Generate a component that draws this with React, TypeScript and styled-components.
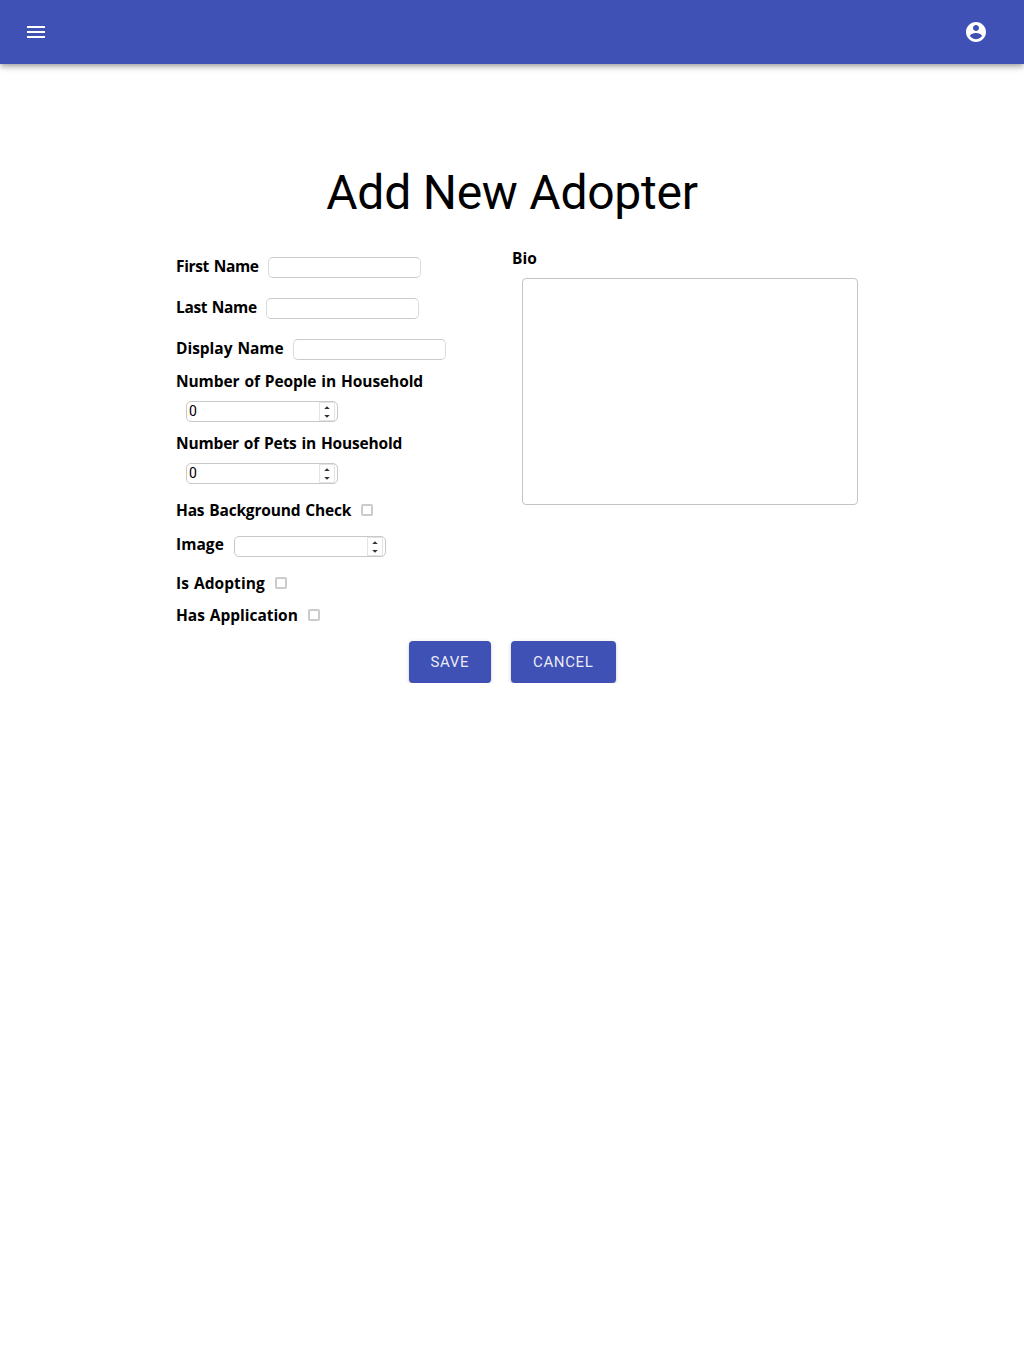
import React from 'react';
import styled, { createGlobalStyle } from 'styled-components';

const Global = createGlobalStyle`
  *, *::before, *::after { box-sizing: border-box; }
  body { margin: 0; background: #fff; color: #000; font-family: 'Open Sans', 'Noto Sans', sans-serif; }
`;

const AppBar = styled.header`
  display: flex;
  align-items: center;
  justify-content: space-between;
  height: 64px;
  padding: 0 24px;
  background: #3f51b5;
  box-shadow: 0 2px 4px -1px rgba(0, 0, 0, 0.2), 0 4px 5px 0 rgba(0, 0, 0, 0.14), 0 1px 10px 0 rgba(0, 0, 0, 0.12);
`;

const IconButton = styled.button<{ $pad?: number }>`
  display: flex;
  padding: 0 ${p => p.$pad ?? 0}px;
  border: 0;
  background: none;
  color: #fff;

  svg { width: 24px; height: 24px; fill: currentColor; }
`;

const Page = styled.main`
  width: 672px;
  margin: 0 auto;
  padding-top: 101px;
`;

const Title = styled.h1`
  margin: 0 0 26px;
  font: 400 48px/56px Roboto, sans-serif;
  letter-spacing: -0.25px;
  text-align: center;
`;

const Columns = styled.form`
  display: grid;
  grid-template-columns: 336px 336px;
`;

const Column = styled.div`
  display: flex;
  flex-direction: column;
`;

const Row = styled.div<{ $h: number }>`
  display: flex;
  align-items: center;
  gap: 10px;
  height: ${p => p.$h}px;
`;

const Stack = styled.div`
  display: flex;
  flex-direction: column;
  gap: 9px;
  height: 62px;
  padding-top: 1px;
`;

const Label = styled.label<{ $w?: number; $ls?: number; $lift?: number }>`
  flex: none;
  width: ${p => (p.$w ? p.$w + 'px' : 'auto')};
  margin-bottom: ${p => (p.$lift ?? 0) * 2}px;
  font-size: 15.5px;
  font-weight: 700;
  line-height: 21px;
  letter-spacing: ${p => p.$ls ?? 0}px;
  word-spacing: 1px;
  white-space: nowrap;
`;

const Field = styled.span`
  display: flex;
  flex: none;
  width: 153px;
  height: 21px;
  border: 1px solid #cbcbcb;
  border-left-color: #dcdcdc;
  border-right-color: #dcdcdc;
  border-radius: 5px;
  background: #fff;
`;

const NumberField = styled(Field)<{ $indent?: number }>`
  width: 152px;
  margin-left: ${p => p.$indent ?? 0}px;
  border-color: #c8c8c8;
`;

const Input = styled.input`
  flex: 1;
  min-width: 0;
  padding: 0 2px;
  border: 0;
  outline: 0;
  background: none;
  font: 400 14px/19px Roboto, sans-serif;
`;

const Spinner = styled.span`
  display: flex;
  flex: none;
  width: 16px;
  height: 19px;
  margin-right: 2px;
  border: 1px solid #e4e4e4;

  svg { width: 14px; height: 17px; fill: #333; }
`;

const Check = styled.span`
  width: 12px;
  height: 12px;
  border: 2px solid #cbcbcb;
  border-radius: 2px;
`;

const BioColumn = styled(Column)`
  padding-top: 1px;
`;

const Bio = styled.textarea`
  display: block;
  width: 336px;
  height: 227px;
  margin: 9px 0 0 10px;
  border: 1px solid #c4c4c4;
  border-radius: 4px;
  resize: none;
`;

const Actions = styled.div`
  display: flex;
  justify-content: center;
  gap: 20px;
  padding-top: 10px;
`;

const Button = styled.button<{ $w: number }>`
  width: ${p => p.$w}px;
  height: 42px;
  padding: 0;
  border: 0;
  border-radius: 4px;
  background: #3f51b5;
  color: rgba(255, 255, 255, 0.9);
  font: 400 15px/26px Roboto, sans-serif;
  letter-spacing: 0.65px;
  box-shadow: 0 3px 1px -2px rgba(0, 0, 0, 0.2), 0 2px 2px 0 rgba(0, 0, 0, 0.14), 0 1px 5px 0 rgba(0, 0, 0, 0.12);
`;

const Arrows = () => (
  <Spinner>
    <svg viewBox="0 0 14 17">
      <path d="M4.2 6h5.6L7 3.2zM4.2 12h5.6L7 14.8z" />
    </svg>
  </Spinner>
);

export default function App() {
  return (
    <>
      <Global />
      <AppBar>
        <IconButton aria-label="menu">
          <svg viewBox="0 0 24 24"><path d="M3 18h18v-2H3v2zm0-5h18v-2H3v2zm0-7v2h18V6H3z" /></svg>
        </IconButton>
        <IconButton $pad={12} aria-label="account">
          <svg viewBox="0 0 24 24"><path d="M12 2C6.48 2 2 6.48 2 12s4.48 10 10 10 10-4.48 10-10S17.52 2 12 2zm0 3c1.66 0 3 1.34 3 3s-1.34 3-3 3-3-1.34-3-3 1.34-3 3-3zm0 14.2c-2.5 0-4.71-1.28-6-3.22.03-1.99 4-3.08 6-3.08 1.99 0 5.97 1.09 6 3.08-1.29 1.94-3.5 3.22-6 3.22z" /></svg>
        </IconButton>
      </AppBar>
      <Page>
        <Title>Add New Adopter</Title>
        <Columns>
          <Column>
            <Row $h={41}><Label $w={82.3} $ls={-0.34} $lift={1}>First Name</Label><Field><Input /></Field></Row>
            <Row $h={41}><Label $w={80.3} $ls={-0.35} $lift={1}>Last Name</Label><Field><Input /></Field></Row>
            <Row $h={41}><Label $w={107.3} $ls={-0.03} $lift={1}>Display Name</Label><Field><Input /></Field></Row>
            <Stack><Label $ls={-0.09}>Number of People in Household</Label><NumberField $indent={10}><Input defaultValue="0" /><Arrows /></NumberField></Stack>
            <Stack><Label $ls={-0.17}>Number of Pets in Household</Label><NumberField $indent={10}><Input defaultValue="0" /><Arrows /></NumberField></Stack>
            <Row $h={32}><Label $w={175} $ls={-0.18}>Has Background Check</Label><Check /></Row>
            <Row $h={41}><Label $w={48} $ls={0.05} $lift={2}>Image</Label><NumberField><Input /><Arrows /></NumberField></Row>
            <Row $h={32}><Label $w={88.6} $ls={0.05}>Is Adopting</Label><Check /></Row>
            <Row $h={32}><Label $w={121.6} $ls={-0.03}>Has Application</Label><Check /></Row>
          </Column>
          <BioColumn>
            <Label>Bio</Label>
            <Bio />
          </BioColumn>
        </Columns>
        <Actions>
          <Button $w={82.5}>SAVE</Button>
          <Button $w={104.5}>CANCEL</Button>
        </Actions>
      </Page>
    </>
  );
}
